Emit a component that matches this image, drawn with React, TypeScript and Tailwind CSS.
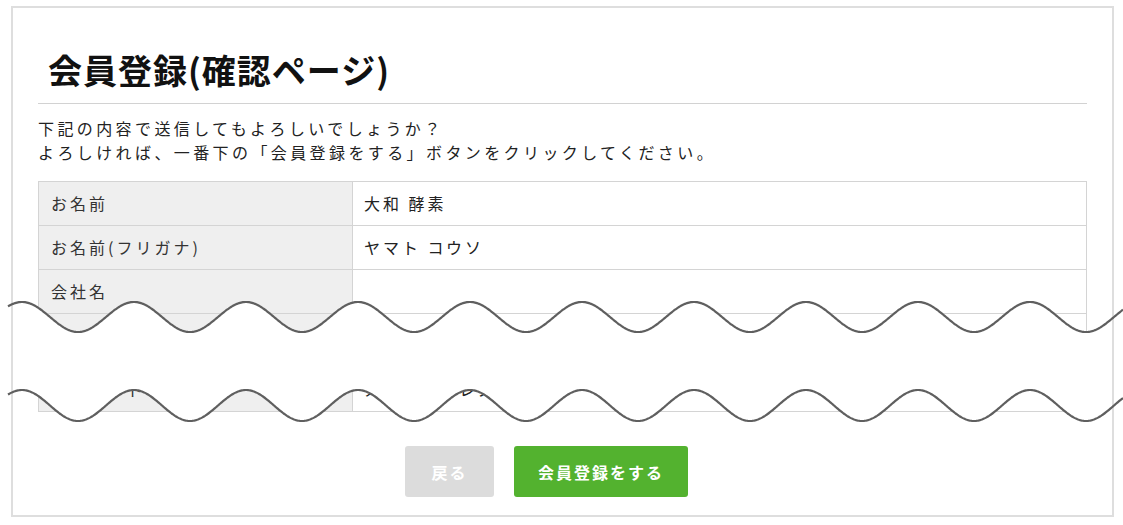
import React from "react";

const FONT = "font-['Noto_Sans_CJK_JP','Noto_Sans',sans-serif]";

function wavePoints(x0: number, x1: number, yc: number, amp: number) {
  const pts: string[] = [];
  for (let x = x0; x <= x1; x += 1) {
    const y = yc - amp * Math.cos((2 * Math.PI * (x - 22)) / 112);
    pts.push(`${x},${y.toFixed(2)}`);
  }
  return pts;
}

function WaveCut() {
  const topFill = wavePoints(13, 1111, 317, 15);
  const botFill = wavePoints(13, 1111, 405.5, 15.5).reverse();
  const fillD = `M${topFill.join(" L")} L${botFill.join(" L")} Z`;
  const topLine = `M${wavePoints(8, 1123, 317, 15).join(" L")}`;
  const botLine = `M${wavePoints(8, 1123, 405.5, 15.5).join(" L")}`;
  return (
    <svg
      className="absolute left-0 top-0 pointer-events-none"
      width={1123}
      height={525}
      viewBox="0 0 1123 525"
    >
      <path d={fillD} fill="#ffffff" />
      <path d={topLine} fill="none" stroke="#5f5f5f" strokeWidth={2.2} />
      <path d={botLine} fill="none" stroke="#5f5f5f" strokeWidth={2.2} />
    </svg>
  );
}

const rows: { label: string; value: string; h: string }[] = [
  { label: "お名前", value: "大和 酵素", h: "h-[44px]" },
  { label: "お名前(フリガナ)", value: "ヤマト コウソ", h: "h-[44px]" },
  { label: "会社名", value: "", h: "h-[44px]" },
  { label: "郵便番号", value: "〒530-0001", h: "h-[54px]" },
  { label: "メールアドレス", value: "メールアドレス", h: "h-[44px]" },
];

export default function App() {
  return (
    <div className={`relative w-[1123px] h-[525px] bg-white overflow-hidden ${FONT}`}>
      <div className="ml-[11px] mt-[6px] w-[1103px] h-[511px] border-2 border-[#dedede]">
        <div className="px-[25px]">
          <h1 className="mt-[42px] ml-[10px] text-[34px] leading-[40px] font-bold tracking-[1px] text-[#111]">
            会員登録(確認ページ)
          </h1>
          <div className="mt-[13px] h-px bg-[#d2d2d2]" />
          <p className="mt-[12px] text-[16px] leading-[24px] tracking-[3.4px] text-[#222]">
            下記の内容で送信してもよろしいでしょうか？
            <br />
            よろしければ、一番下の「会員登録をする」ボタンをクリックしてください。
          </p>
          <div className="mt-[17px] border-t border-l border-r border-[#d4d4d4]">
            {rows.map((r, i) => (
              <div key={i} className={`flex ${r.h} border-b border-[#d4d4d4]`}>
                <div className="w-[314px] shrink-0 bg-[#efefef] border-r border-[#d4d4d4] flex items-center pl-[12px] pb-[2px] text-[16px] tracking-[3px] text-[#333]">
                  {r.label}
                </div>
                <div className="flex-1 flex items-center pl-[11px] pb-[2px] text-[16px] tracking-[3px] text-[#222]">
                  {r.value}
                </div>
              </div>
            ))}
          </div>
          <div className="mt-[34px] flex justify-center gap-[20px] pr-[32px]">
            <button className="w-[89px] h-[51px] rounded-[3px] bg-[#dcdcdc] text-white text-[16px] font-bold tracking-[2px]">
              戻る
            </button>
            <button className="w-[174px] h-[51px] rounded-[3px] bg-[#53b22f] text-white text-[16px] font-bold tracking-[2px]">
              会員登録をする
            </button>
          </div>
        </div>
      </div>
      <WaveCut />
    </div>
  );
}
